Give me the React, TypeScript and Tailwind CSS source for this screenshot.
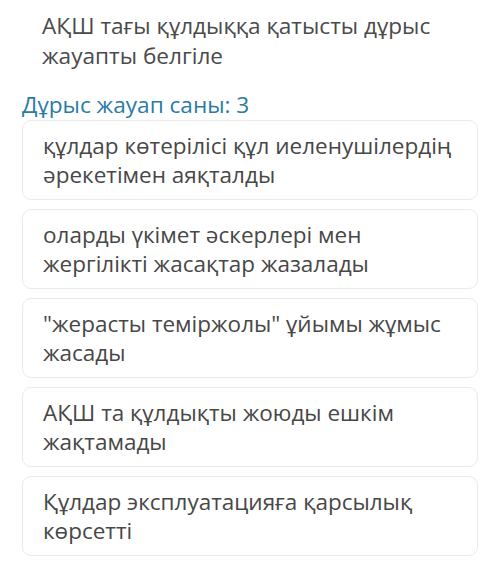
const answers = [
  "құлдар көтерілісі құл иеленушілердің әрекетімен аяқталды",
  "оларды үкімет әскерлері мен жергілікті жасақтар жазалады",
  "\"жерасты теміржолы\" ұйымы жұмыс жасады",
  "АҚШ та құлдықты жоюды ешкім жақтамады",
  "Құлдар эксплуатацияға қарсылық көрсетті",
];

const App = () => {
  return (
    <div
      className="w-[500px] h-[584px] bg-white overflow-hidden"
      style={{ fontFamily: '"Open Sans", "Noto Sans", sans-serif' }}
    >
      <div className="pt-[11px] pl-[42px] pr-[40px]">
        <h1 className="text-[22.6px] leading-[30px] text-[#4a4a4a] font-normal">
          АҚШ тағы құлдыққа қатысты дұрыс жауапты белгіле
        </h1>
      </div>
      <div className="px-[22px] mt-[19px]">
        <p className="text-[22.6px] leading-[29px] text-[#2b7ba3]">Дұрыс жауап саны: 3</p>
        <div className="mt-[1px] flex flex-col gap-[9px]">
          {answers.map((a, i) => (
            <div
              key={i}
              className="h-[80px] rounded-[9px] border border-[#ebebeb] bg-white pl-[20px] pr-[16px] pt-[10px]"
            >
              <p className="text-[22.5px] leading-[29px] text-[#474747]">{a}</p>
            </div>
          ))}
        </div>
      </div>
    </div>
  );
};

export default App;
